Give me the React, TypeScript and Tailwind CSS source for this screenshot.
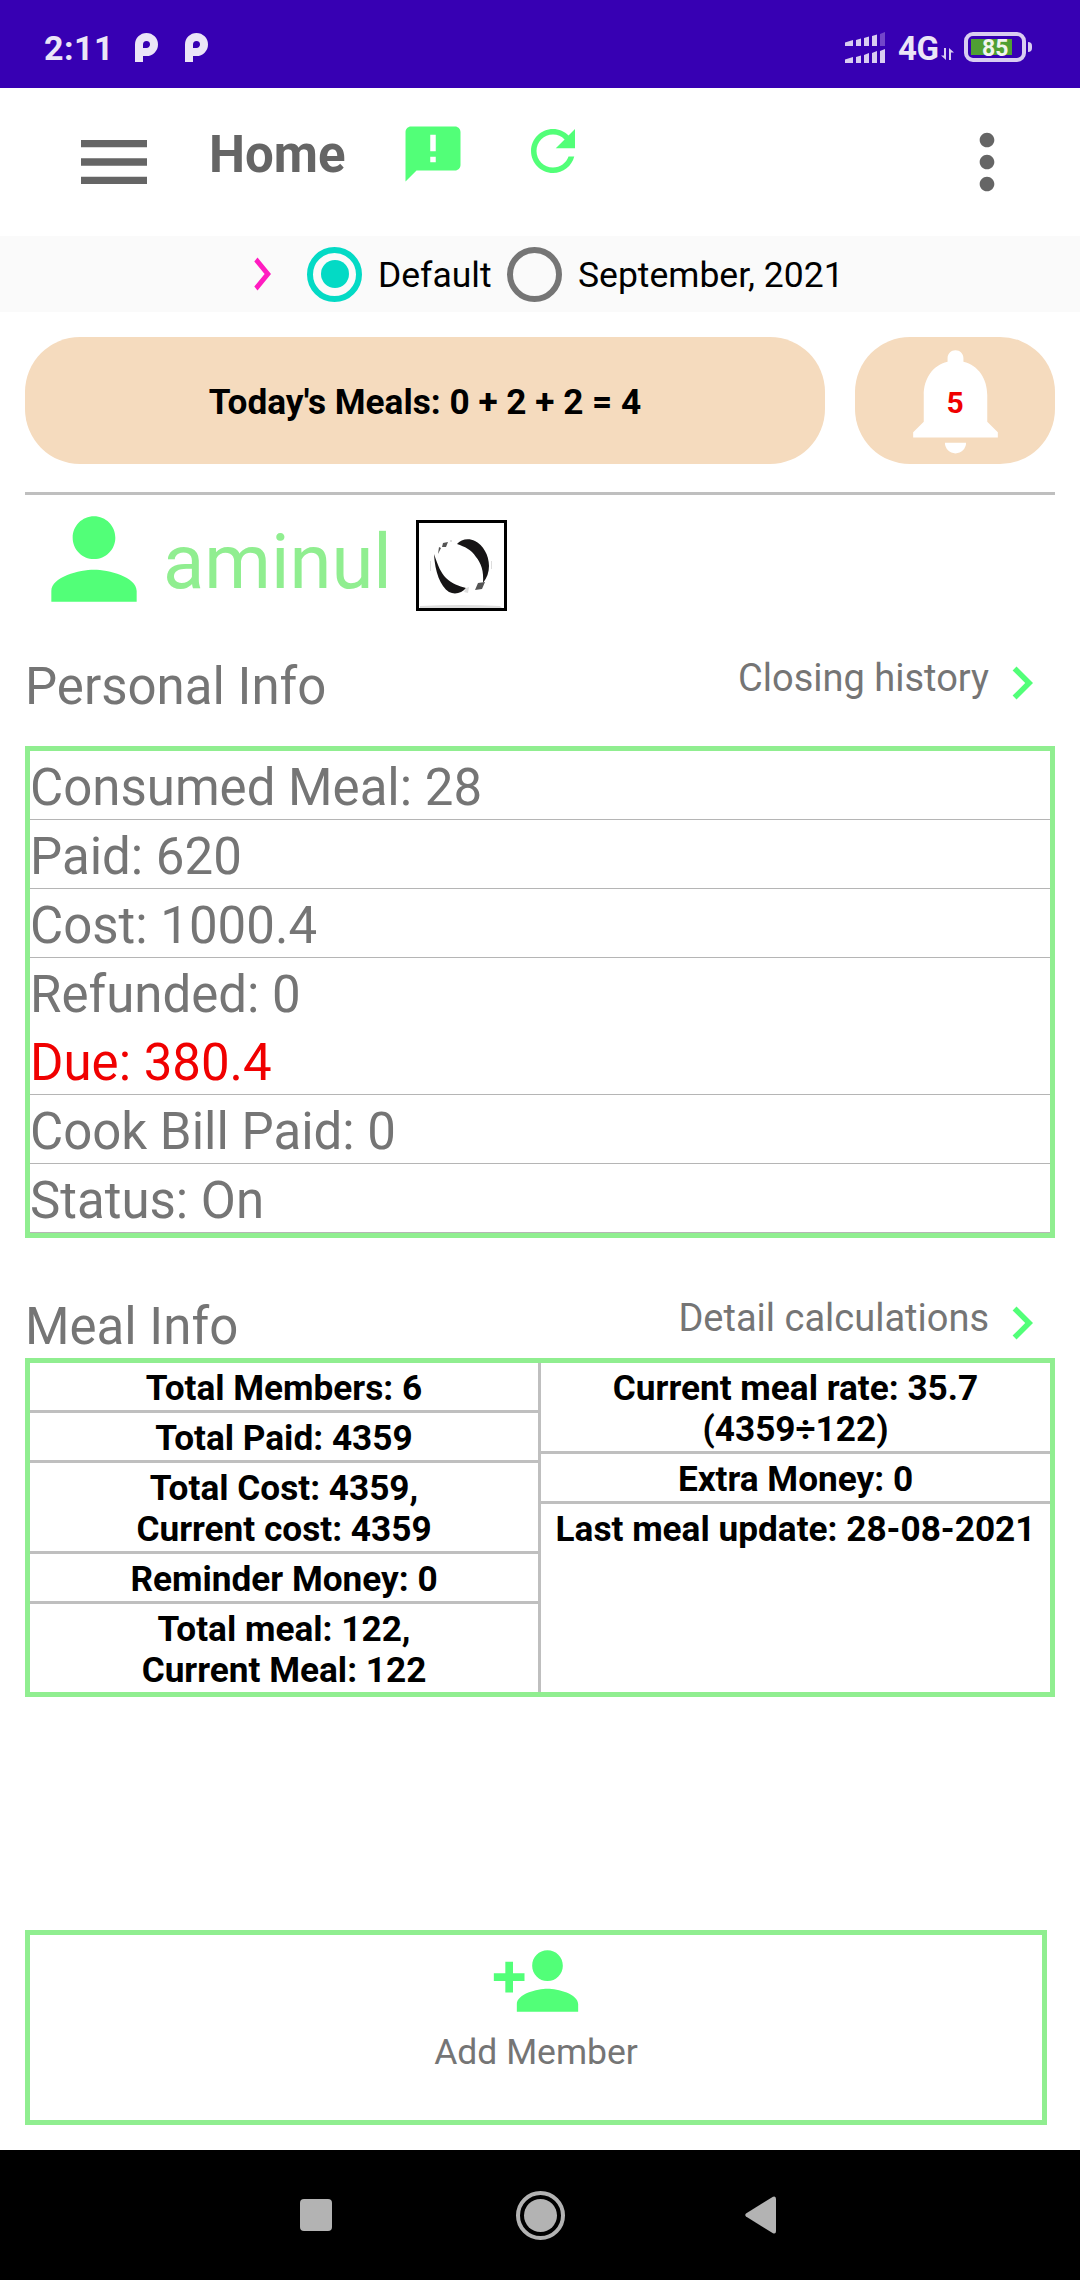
import React from "react";

type IconProps = { d: string; className: string };

function Icon({ d, className }: IconProps) {
  return (
    <svg viewBox="0 0 24 24" preserveAspectRatio="none" fill="currentColor" className={className}>
      <path d={d} />
    </svg>
  );
}

const paths = {
  menu: "M3 18h18v-2H3v2zm0-5h18v-2H3v2zm0-7v2h18V6H3z",
  announcement:
    "M20 2H4c-1.1 0-1.99.9-1.99 2L2 22l4-4h14c1.1 0 2-.9 2-2V4c0-1.1-.9-2-2-2zm-7 9h-2V5h2v6zm0 4h-2v-2h2v2z",
  refresh:
    "M17.65 6.35C16.2 4.9 14.21 4 12 4c-4.42 0-7.99 3.58-7.99 8s3.57 8 7.99 8c3.73 0 6.84-2.55 7.73-6h-2.08c-.82 2.33-3.04 4-5.65 4-3.31 0-6-2.69-6-6s2.69-6 6-6c1.66 0 3.14.69 4.22 1.78L13 11h7V4l-2.35 2.35z",
  more: "M12 8c1.1 0 2-.9 2-2s-.9-2-2-2-2 .9-2 2 .9 2 2 2zm0 2c-1.1 0-2 .9-2 2s.9 2 2 2 2-.9 2-2-.9-2-2-2zm0 6c-1.1 0-2 .9-2 2s.9 2 2 2 2-.9 2-2-.9-2-2-2z",
  bell: "M12 22c1.1 0 2-.9 2-2h-4c0 1.1.89 2 2 2zm6-6v-5c0-3.07-1.64-5.64-4.5-6.32V4c0-.83-.67-1.5-1.5-1.5s-1.5.67-1.5 1.5v.68C7.63 5.36 6 7.92 6 11v5l-2 2v1h16v-1l-2-2z",
  person:
    "M12 12c2.21 0 4-1.79 4-4s-1.79-4-4-4-4 1.79-4 4 1.79 4 4 4zm0 2c-2.67 0-8 1.34-8 4v2h16v-2c0-2.66-5.33-4-8-4z",
  personAdd:
    "M15 12c2.21 0 4-1.79 4-4s-1.79-4-4-4-4 1.79-4 4 1.79 4 4 4zm-9-2V7H4v3H1v2h3v3h2v-3h3v-2H6zm9 4c-2.67 0-8 1.34-8 4v2h16v-2c0-2.66-5.33-4-8-4z",
  chevron: "M10 6L8.59 7.41 13.17 12l-4.58 4.59L10 18l6-6z",
};

function ParkingGlyph({ className }: { className: string }) {
  return (
    <svg viewBox="0 0 23 29" className={className}>
      <path d="M4 29V11.5A7.5 7.5 0 1 1 11.5 19H8" fill="none" stroke="#ebe5f7" strokeWidth="8" />
    </svg>
  );
}

function StatusBar() {
  return (
    <header className="flex h-[88px] shrink-0 items-start bg-[#3700b3] pl-11 pr-12 text-[#ebe5f7]">
      <span className="mt-7 w-[91px] text-[34px] font-bold leading-[41px] tracking-[0.5px]">2:11</span>
      <ParkingGlyph className="mt-[33px] h-[29px] w-[23px]" />
      <ParkingGlyph className="ml-[27px] mt-[33px] h-[29px] w-[23px]" />
      <svg viewBox="0 0 40 31" className="ml-auto mt-8 h-[31px] w-10" fill="#d9cdf1">
        <path d="M0 10.5 8 8V14H0zM11 8 16 6.5V14h-5zM19 6 24 4.5V14h-5zM27 4 32 2.500V14h-5z" />
        <path d="M35 2 40 0V14h-5z" fill="#7346ca" />
        <path d="M0 27.500 8 25V31H0zM11 25 16 23.500V31h-5zM19 23 24 21V31h-5zM27 21 32 19V31h-5zM35 19 40 17V31h-5z" />
      </svg>
      <span className="ml-[13px] mt-[29px] w-[43px] text-[33px] font-bold leading-[40px] tracking-[-0.5px]">4G</span>
      <svg viewBox="0 0 13 12" className="mt-12 h-3 w-[13px]" fill="#d9cdf1">
        <path d="M3 0h2v12L0 7.500h3zM8 12h2V4.500h3L8 0z" />
      </svg>
      <span className="ml-2.5 mt-8 flex h-[30px] w-[62px] items-center rounded-[9px] border-4 border-[#d9cdf1] pl-[3px]">
        <span className="flex h-4 w-[41px] items-center bg-[#4f9f33] pl-[11px] pt-0.5 text-[23px] font-bold leading-none text-[#f1f5ee]">
          85
        </span>
      </span>
      <span className="ml-0.5 mt-[42px] h-2.5 w-1 rounded-r bg-[#d9cdf1]" />
    </header>
  );
}

function Toolbar() {
  return (
    <div className="flex h-[148px] shrink-0 items-start pl-[70px] pt-[30px] text-[#656565]">
      <Icon d={paths.menu} className="size-[88px]" />
      <h1 className="ml-[51px] mt-[7px] w-[191px] text-[51px] font-bold leading-[60px]">Home</h1>
      <Icon d={paths.announcement} className="mt-[3px] size-[66px] text-[#52ff78]" />
      <Icon d={paths.refresh} className="ml-[54px] size-[66px] text-[#52ff78]" />
      <Icon d={paths.more} className="ml-auto mr-[49px] size-[88px]" />
    </div>
  );
}

function Radio({ checked }: { checked?: boolean }) {
  return checked ? (
    <span className="flex size-[55px] items-center justify-center rounded-full border-[6px] border-[#03dac5]">
      <span className="size-7 rounded-full bg-[#03dac5]" />
    </span>
  ) : (
    <span className="size-[55px] rounded-full border-[6px] border-[#757575]" />
  );
}

function PeriodPicker() {
  return (
    <div className="flex h-[76px] shrink-0 items-center bg-[#fafafa] pl-[235px] text-[35.500px] text-black">
      <Icon d={paths.chevron} className="h-[66px] w-[54px] text-[#ff1cc0]" />
      <span className="ml-[18px] flex w-[200px] items-center gap-4">
        <Radio checked />
        <span className="pt-[3px]">Default</span>
      </span>
      <span className="flex items-center gap-4">
        <Radio />
        <span className="pt-[3px]">September, 2021</span>
      </span>
    </div>
  );
}

function SectionHeader({ title, link }: { title: string; link: string }) {
  return (
    <div className="flex items-start text-[#757575]">
      <h2 className="text-[51px] leading-[66px]">{title}</h2>
      <a className="ml-auto text-[38px] leading-[48px]">{link}</a>
      <Icon d={paths.chevron} className="-mt-1 size-[66px] text-[#52ff78]" />
    </div>
  );
}

const personal = [
  { text: "Consumed Meal: 28" },
  { text: "Paid: 620" },
  { text: "Cost: 1000.4" },
  { text: "Refunded: 0", plain: true },
  { text: "Due: 380.4", due: true },
  { text: "Cook Bill Paid: 0" },
  { text: "Status: On" },
];

function PersonalTable() {
  return (
    <div className="mt-[26px] border-[5px] border-[#90ee90] text-[51px] leading-[60px] text-[#757575]">
      {personal.map((r) => (
        <div
          key={r.text}
          className={`${r.plain ? "h-[68px]" : "h-[69px] border-b border-[#b5b5b5]"} ${r.due ? "text-[#f00000]" : ""} pt-[7px]`}
        >
          {r.text}
        </div>
      ))}
    </div>
  );
}

const mealLeft = [
  ["Total Members: 6"],
  ["Total Paid: 4359"],
  ["Total Cost: 4359,", "Current cost: 4359"],
  ["Reminder Money: 0"],
  ["Total meal: 122,", "Current Meal: 122"],
];
const mealRight = [["Current meal rate: 35.7", "(4359÷122)"], ["Extra Money: 0"], ["Last meal update: 28-08-2021"]];

function MealColumn({ cells, className }: { cells: string[][]; className: string }) {
  return (
    <div className={className}>
      {cells.map((lines, i) => (
        <div key={i} className={`${i > 0 ? "border-t-[3px] border-[#bfbfbf]" : ""} pb-px pt-[5px]`}>
          {lines.map((l) => (
            <p key={l}>{l}</p>
          ))}
        </div>
      ))}
    </div>
  );
}

export default function App() {
  return (
    <div className="flex h-[2280px] w-[1080px] flex-col bg-white font-['Roboto',sans-serif]">
      <StatusBar />
      <Toolbar />
      <PeriodPicker />
      <main className="flex grow flex-col px-[25px] pt-[25px]">
        <div className="flex h-[127px] gap-[30px] text-[35.200px] font-bold">
          <div className="flex w-[800px] items-center justify-center rounded-[55px] bg-[#f5dbbe] pt-1 text-black">
            Today's Meals: 0 + 2 + 2 = 4
          </div>
          <div className="relative flex w-[200px] justify-center rounded-[55px] bg-[#f5dbbe]">
            <Icon d={paths.bell} className="size-[127px] text-white" />
            <span className="absolute inset-0 flex items-center justify-center pt-[3px] text-[30px] text-[#f00000]">5</span>
          </div>
        </div>
        <div className="mt-7 h-[3px] bg-[#bfbfbf]" />
        <div className="flex h-[145px] items-start pl-[5px]">
          <Icon d={paths.person} className="size-[128px] text-[#52ff78]" />
          <span className="ml-[5px] mt-[22px] w-[253px] text-[76px] leading-[90px] text-[#90ee90]">aminul</span>
          <svg viewBox="0 0 91 91" className="mt-[25px] size-[91px]">
            <rect x="1.500" y="1.500" width="88" height="88" fill="#fff" stroke="#000" strokeWidth="3" />
            <path d="M4 86Q45 84 84 86L86 88H4z" fill="#ddd" />
            <path
              d="M41 24C45 19 53 18 59 21C67 25 73 35 73 46C73 52 71 58 67 63C68 51 65 43 60 37C55 29 49 27 41 24zM50 68C46 73 39 75 33 72C24 66 19 52 18 34C22 46 25 53 30 58C36 64 43 66 50 68z"
              fill="#161415"
            />
            <path d="M27 23l5-1-2 5-4 0zM23 27l2 1-3 6zM62 63l7-1-3 7-7 1z" fill="#555" />
            <path d="M50 68l3-1-1 6-4-1zM34 20h2v2h-2zM14 41h1v10h-1zM75 41h1v8h-1z" fill="#ddd" />
          </svg>
        </div>
        <div className="mt-[14px]" />
        <SectionHeader title="Personal Info" link="Closing history" />
        <PersonalTable />
        <div className="mt-14" />
        <SectionHeader title="Meal Info" link="Detail calculations" />
        <div className="-mt-0.5 flex h-[339px] border-[5px] border-[#90ee90] text-center text-[35.200px] font-bold leading-[41px] text-black">
          <MealColumn cells={mealLeft} className="w-[508px]" />
          <MealColumn cells={mealRight} className="grow border-l-[3px] border-[#bfbfbf]" />
        </div>
        <button className="mb-[25px] mr-2 mt-auto flex h-[195px] flex-col items-center border-[5px] border-[#90ee90] text-[35.500px] text-[#757575]">
          <Icon d={paths.personAdd} className="size-[92px] text-[#52ff78]" />
          <span className="mt-[5px] leading-[41px]">Add Member</span>
        </button>
      </main>
      <nav className="flex h-[130px] shrink-0 items-center bg-black pl-[300px] text-[#b3b3b3]">
        <span className="size-8 rounded-sm bg-[#b3b3b3]" />
        <span className="ml-[184px] mr-[180px] flex size-[49px] items-center justify-center rounded-full border-4 border-[#b3b3b3]">
          <span className="size-[33px] rounded-full bg-[#b3b3b3]" />
        </span>
        <svg viewBox="0 0 31 38" className="h-[38px] w-[31px]" fill="currentColor">
          <path d="M1 17.500 28 .7Q31-.5 31 3V35Q31 38.500 28 37.300L1 20.500Q-.5 19 1 17.500z" />
        </svg>
      </nav>
    </div>
  );
}
